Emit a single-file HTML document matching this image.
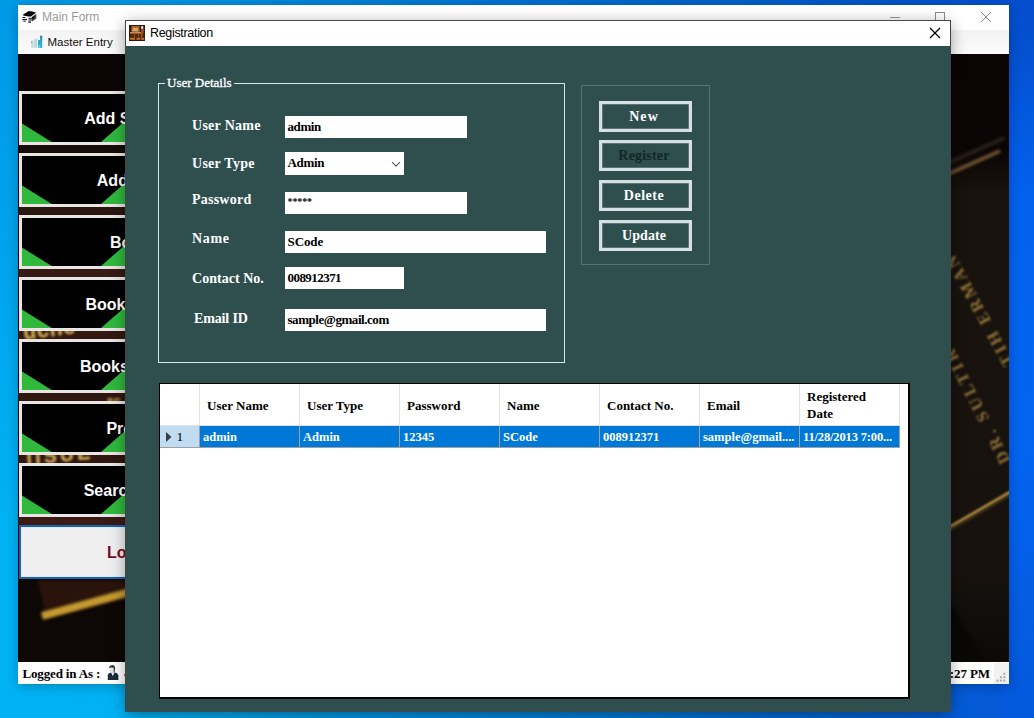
<!DOCTYPE html>
<html>
<head>
<meta charset="utf-8">
<title>Registration</title>
<style>
*{box-sizing:border-box;margin:0;padding:0}
html,body{width:1034px;height:718px;overflow:hidden}
body{position:relative;background:linear-gradient(180deg,rgba(0,30,160,.17) 0,rgba(0,30,160,.12) 25%,rgba(0,30,160,0) 75%),linear-gradient(90deg,#00b2f4 0%,#00b0f3 12%,#0098e4 30%,#0079d6 58%,#0360cf 85%,#0558d8 97%,#0558d8 100%);font-family:"Liberation Sans",sans-serif;}
.abs{position:absolute}
.ser{font-family:"Liberation Serif",serif}
.b{font-weight:bold}
/* main window */
#main{position:absolute;left:18px;top:5px;width:991px;height:679px;background:#0a0605;overflow:hidden;box-shadow:0 2px 10px rgba(0,0,0,.25)}
#mtitle{position:absolute;left:0;top:0;width:991px;height:25px;background:#fff}
#mmenu{position:absolute;left:0;top:25px;width:991px;height:24px;background:linear-gradient(#f3f3f3,#fbfbfb)}
#mstatus{position:absolute;left:0;top:657px;width:991px;height:22px;background:#fff}
.mbtn{position:absolute;left:1px;width:222px;height:54px;border:3px solid #e9e5e5;background:#000;overflow:hidden}
.mbtn span{position:absolute;color:#fff;font:bold 16px "Liberation Sans",sans-serif;white-space:nowrap;top:16px;line-height:18px}
.mbtn svg{position:absolute;left:0;top:0}
/* dialog */
#dlg{position:absolute;left:126px;top:21px;width:824px;height:690px;background:#2f4f4f;box-shadow:0 0 0 1px #3d4848,0 3px 15px rgba(0,0,0,.4)}
#dlg:before{content:"";position:absolute;left:-1px;top:-1px;width:826px;height:1px;background:#4a4a4a}
#dtitle{position:absolute;left:0;top:0;width:824px;height:25px;background:#fff}
.lbl{position:absolute;color:#fff;font:bold 14px "Liberation Serif",serif;white-space:nowrap;line-height:17px}
.inp{position:absolute;background:#fff;height:22px;font:bold 13px "Liberation Serif",serif;color:#000;line-height:22px;padding-left:3px;white-space:nowrap;overflow:hidden}
.btn{position:absolute;left:473px;width:93px;height:31px;border:3px solid #d6dfe1;color:#fff;font:bold 14px "Liberation Serif",serif;text-align:center;line-height:26.5px;padding-right:3px;box-shadow:inset 0 0 0 .5px #8a9c9c}
#grid{position:absolute;left:32.500px;top:362px;width:751px;height:315.700px;background:#000}
#gin{position:absolute;left:1.500px;top:1px;width:748px;height:313.400px;background:#fff}
.hc{position:absolute;top:0;height:41.500px;border-right:1px solid #e2e2e2;border-bottom:1px solid #e2e2e2;font:bold 13px "Liberation Serif",serif;color:#000;padding:1.500px 0 0 7px;display:flex;align-items:center;line-height:17px}
.rc{position:absolute;top:41.500px;height:22px;background:#0078d7;color:#fff;border-right:1px solid #a0a0a0;border-bottom:1px solid #a0a0a0;font:bold 12.5px "Liberation Serif",serif;line-height:22.500px;padding-left:3px;white-space:nowrap;overflow:hidden}
</style>
</head>
<body>

<div class="abs" style="left:1004px;top:0;width:30px;height:718px;background:linear-gradient(180deg,rgba(0,100,255,0) 6%,rgba(0,108,255,.62) 28%,rgba(0,108,255,.62) 62%,rgba(0,100,255,.1) 95%)"></div>
<div id="main">
  <div id="mtitle">
    <svg class="abs" style="left:3.800px;top:5.900px" width="15" height="12.500" viewBox="0 0 15 12.500"><defs><pattern id="chk" width="1.400" height="1.400" patternUnits="userSpaceOnUse" patternTransform="rotate(40)"><rect width="0.700" height="0.700" fill="#000"/><rect x="0.700" y="0.700" width="0.700" height="0.700" fill="#000"/></pattern></defs><path d="M1.200 3.500L6.300 0.150H9.400L14.100 1.400L9 5.500H6.300L1.200 4.400Z" fill="#050505"/><path d="M14.300 2.600V7.400L10 10.600V6.100Z" fill="url(#chk)"/><path d="M14.300 2.600V7.400L10 10.600V6.100Z" fill="#000" opacity=".25"/><path d="M0.500 6.500H3.300M0.200 8.600H5M1.400 10.200H3.600" stroke="#050505" stroke-width="1"/><path d="M6.600 7.300H10.600M6.300 9H10M6.300 11.100H9" stroke="#050505" stroke-width="1.100"/></svg>
    <div class="abs" style="left:24px;top:5px;font-size:12px;color:#9a9a9a;line-height:14px">Main Form</div>
    <svg class="abs" style="left:868px;top:0" width="120" height="25" viewBox="886 5 120 25"><path d="M890 17.500h10" stroke="#999" stroke-width="1"/><rect x="935.500" y="12.500" width="9" height="9" fill="none" stroke="#8a8a8a"/><path d="M981 12l10 10M991 12l-10 10" stroke="#8a8a8a" stroke-width="1"/></svg>
  </div>
  <div id="mmenu">
    <svg class="abs" style="left:12px;top:5px" width="14" height="14" viewBox="30 35 14 14"><defs><linearGradient id="mg" x1="0" y1="0" x2="0" y2="1"><stop offset="0" stop-color="#2a78a8"/><stop offset=".4" stop-color="#23a4cc"/><stop offset="1" stop-color="#22b8e2"/></linearGradient></defs><g opacity=".75"><rect x="31.300" y="40.500" width="2.300" height="7.400" fill="#b4ccd6"/><rect x="34.200" y="38.800" width="3" height="9.100" fill="#a6d0dc"/><rect x="31" y="41.300" width="1" height="2" fill="#9a8a98"/></g><rect x="40.100" y="35.700" width="2.100" height="12.200" fill="url(#mg)"/><path d="M38.100 40h2.200v7.900h-0.800v-3h-1.400z" fill="#29a6c8"/><rect x="38.100" y="44.800" width="1" height="3.100" fill="#25b2dc"/></svg>
    <div class="abs" style="left:29.500px;top:4.500px;font-size:11.500px;color:#111;line-height:14px">Master Entry</div>
  </div>

  <svg id="photo" class="abs" style="left:0;top:49px" width="991" height="608" viewBox="18 54 991 608">
    <defs>
      <filter color-interpolation-filters="sRGB" id="bl1" x="-20%" y="-20%" width="140%" height="140%"><feGaussianBlur color-interpolation-filters="sRGB" stdDeviation="0.85"/></filter>
      <filter color-interpolation-filters="sRGB" id="bl2" x="-20%" y="-100%" width="140%" height="300%"><feGaussianBlur color-interpolation-filters="sRGB" stdDeviation="1.4"/></filter>
      <linearGradient id="lg1" x1="0" y1="0" x2="0" y2="1"><stop offset="0" stop-color="#0a0504"/><stop offset="0.16" stop-color="#0b0605"/><stop offset="0.23" stop-color="#19130e"/><stop offset="0.85" stop-color="#17120e"/><stop offset="1" stop-color="#0c0a08"/></linearGradient>
    </defs>
    <rect x="18" y="54" width="991" height="608" fill="#0b0605"/>
    <rect x="940" y="54" width="69" height="608" fill="url(#lg1)"/>
    <path d="M940 585L990 670H940Z" fill="#0a0806" filter="url(#bl2)"/>
    <!-- right strip stripes -->
    <g filter="url(#bl2)">
      <path d="M946 164L1004 138" stroke="#2a2019" stroke-width="4"/>
      <path d="M946 175L1000 151" stroke="#7d5d36" stroke-width="3.200"/>
    </g>
    <g filter="url(#bl1)">
      <path d="M946 529L1012 490.900" stroke="#c39c44" stroke-width="2.400"/>
      <path d="M946 532.500L1012 494.400" stroke="#4a3719" stroke-width="1.500"/>
    </g>
    <g filter="url(#bl1)" font-family="Liberation Serif, serif" font-weight="bold" font-size="17" fill="#ac8a42" opacity=".82">
      <text transform="translate(1014,362.400) rotate(-118.700)" letter-spacing="3">TIH ERMAN</text>
      <text transform="translate(1010.600,460.600) rotate(-116.700)" letter-spacing="3.500">DR. SULTIR</text>
    </g>
    <!-- left strip gaps -->
    <rect x="18" y="145" width="120" height="8" fill="#170c09"/>
    <rect x="18" y="207" width="120" height="8" fill="#2a1710"/>
    <rect x="18" y="269" width="120" height="8" fill="#351b13"/>
    <rect x="18" y="331" width="120" height="8" fill="#33190f"/>
    <rect x="18" y="393" width="120" height="8" fill="#30170f"/>
    <rect x="18" y="455" width="120" height="8" fill="#30170f"/>
    <rect x="18" y="517" width="120" height="8" fill="#3a1a12"/>
    <g filter="url(#bl1)" font-family="Liberation Sans, sans-serif" font-weight="bold" fill="#c6a152" stroke="#c6a152" stroke-width=".6">
      <text x="24" y="339.500" font-size="21" letter-spacing="1" transform="rotate(-7 24 339.500)">ucne</text>
      <text x="27" y="464.500" font-size="19" letter-spacing="3.500" transform="rotate(-5 27 464.500)">IISUE°</text>
      <text x="107" y="405" font-size="12" fill="#8a6a30">sc</text>
    </g>
    <!-- bottom-left -->
    <rect x="18" y="580" width="120" height="82" fill="#0d0806"/>
    <path d="M38 580H138V595L46 618Z" fill="#2a130a" filter="url(#bl2)"/>
    <path d="M42 616L130 592" stroke="#c49a2e" stroke-width="8" filter="url(#bl2)"/>
  </svg>

  <div class="mbtn" style="top:86px"><svg width="216" height="48" viewBox="0 0 216 48"><path d="M0 29.500L29.700 48H0Z" fill="#2fb83c"/><path d="M79 48L134 0H216V48Z" fill="#2fb83c"/><path d="M79 48L134 0" stroke="none"/></svg><span style="left:62.2px">Add Student</span></div>
  <div class="mbtn" style="top:148px"><svg width="216" height="48" viewBox="0 0 216 48"><path d="M0 29.500L29.700 48H0Z" fill="#2fb83c"/><path d="M79 48L134 0H216V48Z" fill="#2fb83c"/><path d="M79 48L134 0" stroke="none"/></svg><span style="left:74.8px">Add Book</span></div>
  <div class="mbtn" style="top:210px"><svg width="216" height="48" viewBox="0 0 216 48"><path d="M0 29.500L29.700 48H0Z" fill="#2fb83c"/><path d="M79 48L134 0H216V48Z" fill="#2fb83c"/><path d="M79 48L134 0" stroke="none"/></svg><span style="left:87.9px">Book Issue</span></div>
  <div class="mbtn" style="top:272px"><svg width="216" height="48" viewBox="0 0 216 48"><path d="M0 29.500L29.700 48H0Z" fill="#2fb83c"/><path d="M79 48L134 0H216V48Z" fill="#2fb83c"/><path d="M79 48L134 0" stroke="none"/></svg><span style="left:63.5px">Book Return</span></div>
  <div class="mbtn" style="top:334px"><svg width="216" height="48" viewBox="0 0 216 48"><path d="M0 29.500L29.700 48H0Z" fill="#2fb83c"/><path d="M79 48L134 0H216V48Z" fill="#2fb83c"/><path d="M79 48L134 0" stroke="none"/></svg><span style="left:58.0px">Books Report</span></div>
  <div class="mbtn" style="top:396px"><svg width="216" height="48" viewBox="0 0 216 48"><path d="M0 29.500L29.700 48H0Z" fill="#2fb83c"/><path d="M79 48L134 0H216V48Z" fill="#2fb83c"/><path d="M79 48L134 0" stroke="none"/></svg><span style="left:84.4px">Profile</span></div>
  <div class="mbtn" style="top:458px"><svg width="216" height="48" viewBox="0 0 216 48"><path d="M0 29.500L29.700 48H0Z" fill="#2fb83c"/><path d="M79 48L134 0H216V48Z" fill="#2fb83c"/><path d="M79 48L134 0" stroke="none"/></svg><span style="left:61.7px">Search Book</span></div>

  <div class="abs" id="logout" style="left:1px;top:520px;width:222px;height:54px;background:#efefef;border:2px solid #1c60aa;box-shadow:inset 0 0 0 1px #d6ecff"><span class="abs" style="left:85.9px;top:17px;font:bold 16px 'Liberation Sans',sans-serif;color:#760a24;line-height:18px;white-space:nowrap">Logout</span></div>

  <div id="mstatus">
    <div class="abs" style="left:976px;top:1px;width:15px;height:21px;background:#f1f1f1"></div>
    <div class="abs ser b" style="left:4.500px;top:3.500px;font-size:13px;line-height:16px;color:#000;letter-spacing:-.15px">Logged in As :</div>
    <svg class="abs" style="left:88px;top:2px" width="16" height="18" viewBox="106 664 16 18"><defs><filter color-interpolation-filters="sRGB" id="pb" x="-10%" y="-10%" width="120%" height="120%"><feGaussianBlur color-interpolation-filters="sRGB" stdDeviation="0.45"/></filter></defs><g filter="url(#pb)"><path d="M107.800 680V675.200Q108 673.200 110.500 672.800L115 672.600Q118 673.200 118.400 675.500V680Z" fill="#1b2b3b"/><path d="M111.200 672.800L112.800 676.200L114.300 672.800Z" fill="#f4f6f8"/><ellipse cx="111.900" cy="669.400" rx="2.600" ry="3.100" fill="#e6e6e6"/><path d="M109 667.600Q109.500 665 112.500 665Q115.200 665.300 115.200 668.500L114.600 672H113.600L113.800 668.200Q112 667.200 109 667.900Z" fill="#3e3e3e"/></g></svg>
    <div class="abs ser b" style="left:106px;top:3px;font-size:13.500px;line-height:16px;color:#000">admin</div>
    <div class="abs ser b" style="left:880px;top:3.500px;font-size:13px;line-height:16px;color:#000;width:92px;text-align:right;white-space:nowrap;letter-spacing:-.1px">3:27 PM</div>
    <svg class="abs" style="left:977px;top:10px" width="12" height="10" viewBox="0 0 12 10"><g fill="#a9a9a9"><rect x="8.300" y="0.800" width="2" height="2"/><rect x="4.900" y="4.200" width="2" height="2"/><rect x="8.300" y="4.200" width="2" height="2"/><rect x="1.500" y="7.600" width="2" height="2"/><rect x="4.900" y="7.600" width="2" height="2"/><rect x="8.300" y="7.600" width="2" height="2"/></g></svg>
  </div>
</div>

<div id="dlg">
  <div id="dtitle">
    <svg class="abs" style="left:3px;top:4px" width="16" height="16" viewBox="0 0 16 16"><defs><filter color-interpolation-filters="sRGB" id="ib" x="0" y="0" width="100%" height="100%"><feGaussianBlur color-interpolation-filters="sRGB" stdDeviation="0.7"/></filter><clipPath id="ic"><rect width="16" height="16"/></clipPath></defs><g clip-path="url(#ic)"><rect width="16" height="16" fill="#3a1a08"/><g filter="url(#ib)"><rect x="2.500" y="1" width="8" height="7" fill="#a8682e"/><rect x="3.500" y="3" width="5.500" height="3" fill="#dca468"/><rect x="1" y="7" width="13" height="1.600" fill="#cf8e4c"/><rect x="1" y="9" width="14" height="3.600" fill="#5c2410"/><rect x="5" y="9" width="1" height="4" fill="#8a4a20"/><rect x="9" y="9" width="1" height="4" fill="#8a4a20"/><rect x="12" y="8.500" width="1.200" height="4" fill="#a05a28"/><rect x="0.500" y="12.800" width="15" height="2" fill="#b8741e"/><rect x="6" y="12.500" width="1.500" height="2.500" fill="#5a2008"/><rect x="11" y="12.500" width="1" height="2.500" fill="#5a2008"/><rect x="12.200" y="1.200" width="2" height="2.600" fill="#fff"/><rect x="12" y="4" width="3" height="4" fill="#8a4a1c"/></g><rect x="0" y="0" width="16" height="16" fill="none" stroke="#2a1206" stroke-width="1"/></g></svg>
    <div class="abs" style="left:24px;top:4px;font-size:12.5px;color:#000;line-height:16px;letter-spacing:-.32px">Registration</div>
    <svg class="abs" style="left:802px;top:5.200px" width="14" height="14" viewBox="0 0 14 14"><path d="M2 2l10 10M12 2L2 12" stroke="#000" stroke-width="1.250"/></svg>
  </div>

  <!-- group box -->
  <div class="abs" style="left:32px;top:62px;width:407px;height:280px;border:1px solid #d5e6e6"></div>
  <div class="abs ser" style="left:39px;top:54px;padding:0 2px;background:#2f4f4f;color:#fff;font-size:13px;line-height:16px;-webkit-text-stroke:.3px #fff">User Details</div>

  <div class="lbl" style="left:66px;top:95.500px;letter-spacing:.28px">User Name</div>
  <div class="lbl" style="left:66px;top:133.500px;letter-spacing:.27px">User Type</div>
  <div class="lbl" style="left:66px;top:169.500px;letter-spacing:.23px">Password</div>
  <div class="lbl" style="left:66px;top:208.500px;letter-spacing:.7px">Name</div>
  <div class="lbl" style="left:66px;top:248.500px;letter-spacing:.03px">Contact No.</div>
  <div class="lbl" style="left:68px;top:288.500px;letter-spacing:-.15px">Email ID</div>

  <div class="inp" style="left:158.500px;top:95px;width:182px;letter-spacing:-.42px">admin</div>
  <div class="inp" style="left:158.500px;top:131px;width:119.500px;height:23px;letter-spacing:-.34px">Admin<svg class="abs" style="left:106px;top:9px" width="10" height="7" viewBox="0 0 10 7"><path d="M1 1l4 4L9 1" fill="none" stroke="#3c3c3c" stroke-width="1.050"/></svg></div>
  <div class="inp" style="left:158.500px;top:171px;width:182px;font-size:10px;line-height:19px;letter-spacing:-.1px">*****</div>
  <div class="inp" style="left:158.500px;top:210px;width:261px;letter-spacing:-.1px">SCode</div>
  <div class="inp" style="left:158.500px;top:246px;width:119.500px;letter-spacing:-.55px">008912371</div>
  <div class="inp" style="left:158.500px;top:288px;width:261px;letter-spacing:-.45px">sample@gmail.com</div>

  <!-- button panel -->
  <div class="abs" style="left:455px;top:64px;width:129px;height:180px;border:1px solid #557272"></div>
  <div class="btn" style="top:80px;letter-spacing:1.1px">New</div>
  <div class="btn" style="top:119px;color:#112727;letter-spacing:.19px">Register</div>
  <div class="btn" style="top:159px;letter-spacing:.5px">Delete</div>
  <div class="btn" style="top:199px;letter-spacing:.09px">Update</div>

  <div id="grid"><div id="gin">
    <div class="hc" style="left:0;width:40px"></div>
    <div class="hc" style="left:40px;width:100px">User Name</div>
    <div class="hc" style="left:140px;width:100px">User Type</div>
    <div class="hc" style="left:240px;width:100px">Password</div>
    <div class="hc" style="left:340px;width:100px">Name</div>
    <div class="hc" style="left:440px;width:100px">Contact No.</div>
    <div class="hc" style="left:540px;width:100px">Email</div>
    <div class="hc" style="left:640px;width:100px">Registered<br>Date</div>
    <div class="rc" style="left:0;width:40px;background:#bfdcf3;color:#000;font-weight:normal;font-size:13.500px;padding-left:16.500px"><svg class="abs" style="left:6px;top:6.500px" width="6" height="10" viewBox="0 0 6 10"><path d="M0 0L5.500 5L0 10Z" fill="#3c3c3c"/></svg>1</div>
    <div class="rc" style="left:40px;width:100px">admin</div>
    <div class="rc" style="left:140px;width:100px">Admin</div>
    <div class="rc" style="left:240px;width:100px">12345</div>
    <div class="rc" style="left:340px;width:100px">SCode</div>
    <div class="rc" style="left:440px;width:100px">008912371</div>
    <div class="rc" style="left:540px;width:100px">sample@gmail....</div>
    <div class="rc" style="left:640px;width:100px;letter-spacing:-.15px">11/28/2013 7:00...</div>
  </div></div>
</div>

</body>
</html>
